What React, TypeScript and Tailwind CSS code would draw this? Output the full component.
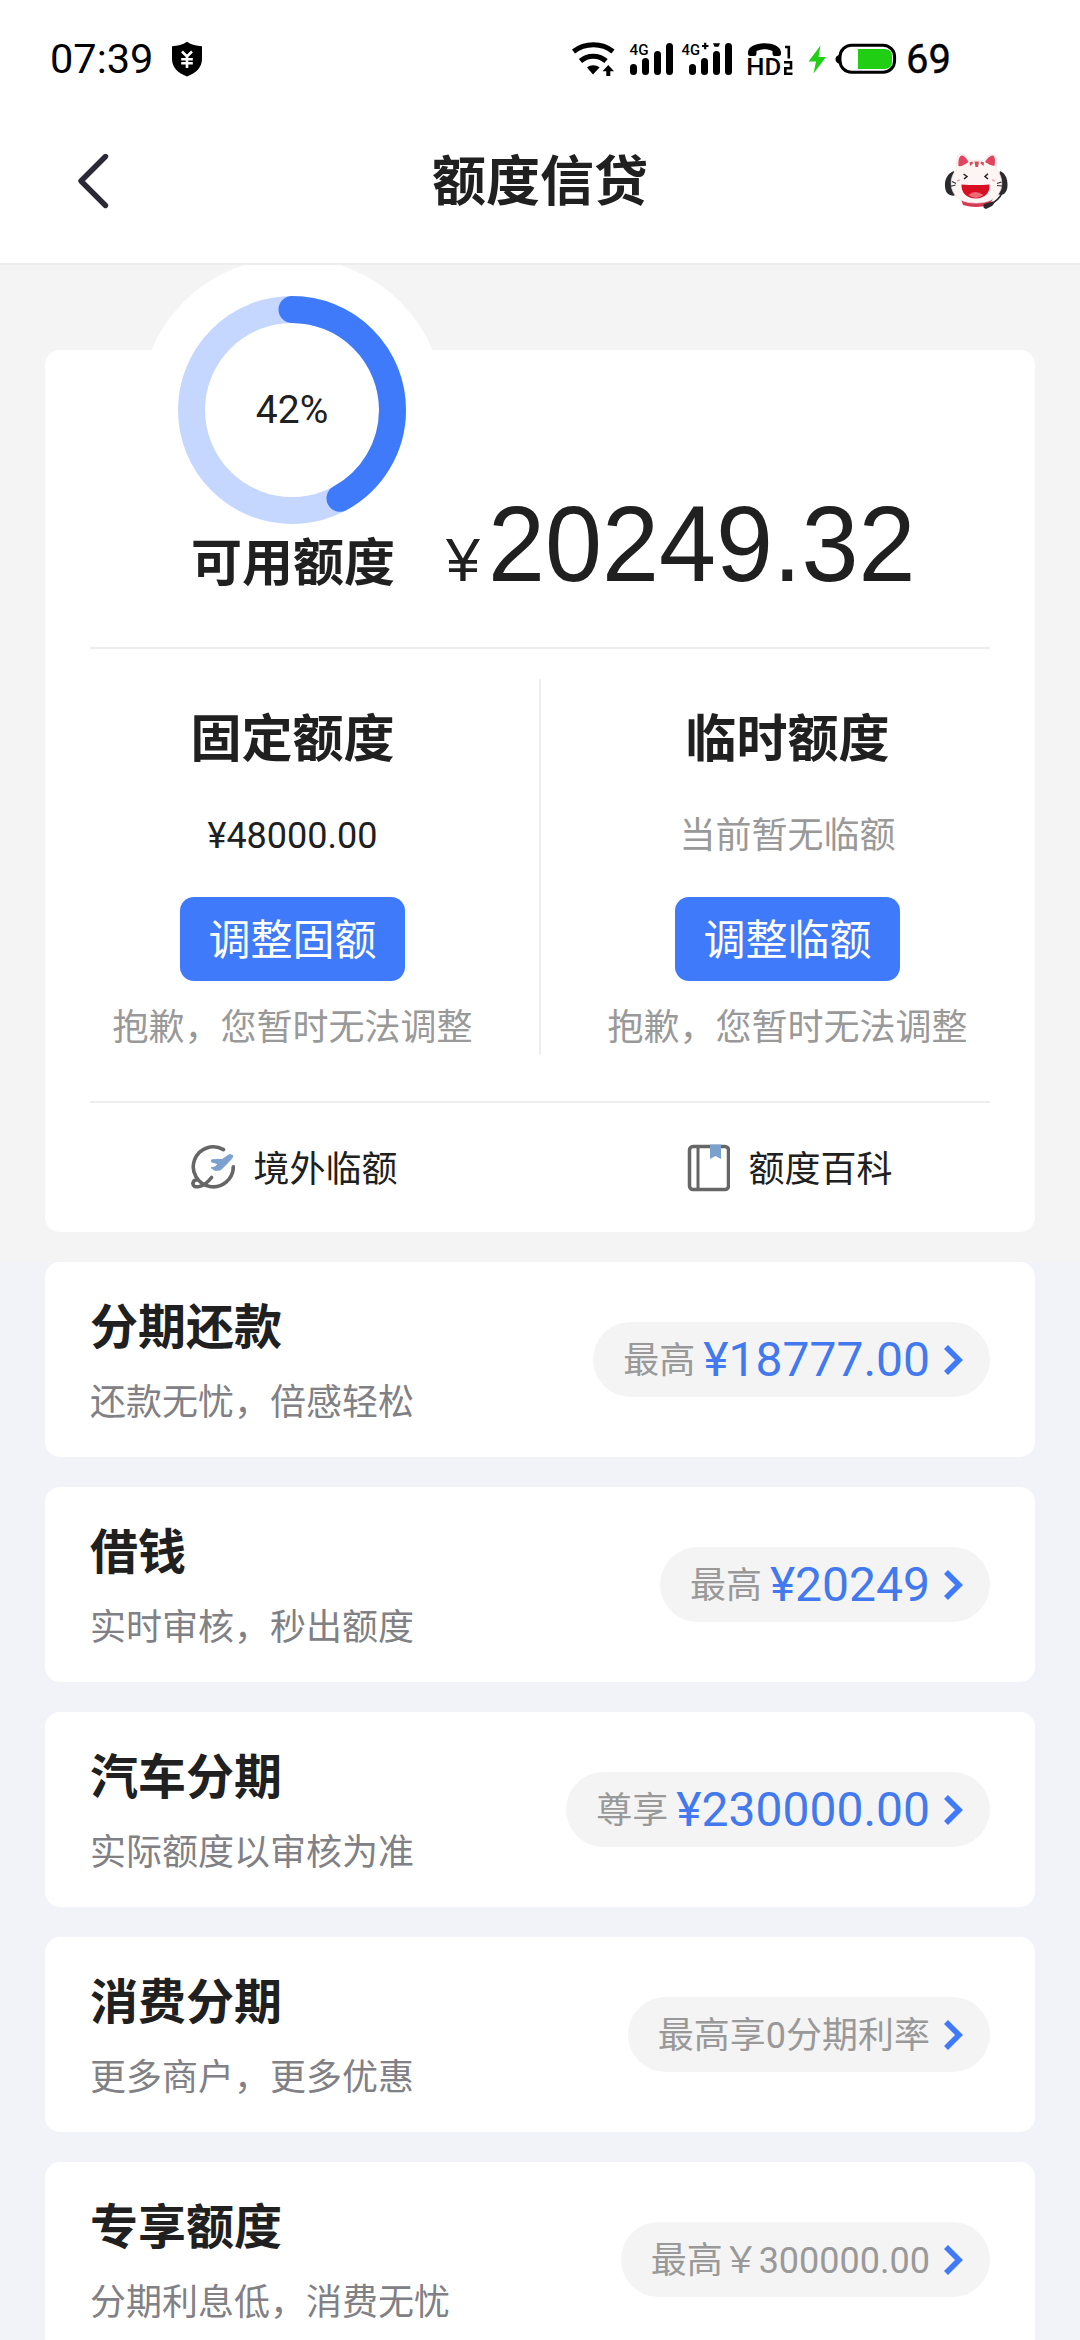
import React from "react";

function ShieldIcon() {
  return (
    <svg className="ml-[18px] h-[36px] w-[32px]" viewBox="0 0 32 36">
      <path d="M16 .8C20.500 3.800 25 5 31 5.300V18c0 8.500-6 14-15 17.500C7 32 1 26.500 1 18V5.300C7 5 11.500 3.800 16 .8Z" fill="#000" />
      <path d="M11 10.500 16 15.500l5-5M10.200 18.200h11.600M10.200 22.200h11.600M16 15v12" fill="none" stroke="#fff" strokeWidth="2.600" />
    </svg>
  );
}

/* Wi-Fi, signal, call and battery indicators share one 390 x 60 strip. */
function StatusIcons() {
  return (
    <svg className="h-[60px] w-[390px] overflow-visible" viewBox="570 29 390 60" fontFamily="Roboto, sans-serif">
      <g fill="none" stroke="#000">
        <path d="M573.500 51.500C585 42.500 602 42.500 613 51.500" strokeWidth="5" />
        <path d="M580.500 61C588 54.500 598.500 54.500 606 61" strokeWidth="5" />
      </g>
      <path d="M587 67.500C590.500 64.500 596 64.500 599.500 67.500L593 74.500Z" />
      <path d="M608.300 65 614 71.300H610.300V76H606.300V71.300H602.500Z" />
      <text x="629.500" y="54.800" fontSize="15.500" fontWeight="500" textLength="19" lengthAdjust="spacingAndGlyphs">4G</text>
      <g stroke="#000" strokeWidth="7" strokeLinecap="round">
        <path d="M633.500 67.500V71.500M645.500 61.500V71.500M657.500 54.500V71.500M669.500 46.500V71.500" />
        <path d="M692.500 67.500V71.500M704.500 61.500V71.500M716.500 54.500V71.500M728.500 46.500V71.500" />
      </g>
      <text x="681.500" y="54.800" fontSize="15.500" fontWeight="500" textLength="18.500" lengthAdjust="spacingAndGlyphs">4G</text>
      <path d="M702 46h6.500M705.200 42.800v6.500" stroke="#000" strokeWidth="2.200" />
      <path d="M713 43.300h7l-1.500 3.400h-4Z" />
      <path d="M748 52.500C748 40 781 40 781 52.500V53.500Q781 56 778.500 56H774.500Q772.500 56 772.500 53.500V51C767 48.800 762 48.800 756.500 51V53.500Q756.500 56 754.500 56H750.500Q748 56 748 53.500Z" />
      <text x="746.300" y="74.500" fontSize="24" fontWeight="500" textLength="35" lengthAdjust="spacingAndGlyphs">HD</text>
      <path d="M785 47H788.800V58.500M784 62.300H791V68.200H785.300V73.800H792.500" fill="none" stroke="#000" strokeWidth="2.600" />
      <path d="M820.500 45.500 808.500 61.500H816L813.500 73.500 826 57H818.500Z" fill="#20cf14" />
      <path d="M842 54C836.500 55 835.500 57.500 835.500 59.200S836.500 63.500 842 64.500Z" />
      <rect x="840" y="45.300" width="54.600" height="27" rx="11.500" fill="#fff" stroke="#000" strokeWidth="3" />
      <path d="M858 49H884.500Q892 49 892 56V62Q892 69 884.500 69H858Z" fill="#20cf14" />
      <text x="906" y="73" fontSize="41" stroke="#000" strokeWidth=".4" textLength="45" lengthAdjust="spacingAndGlyphs">69</text>
    </svg>
  );
}

function CatIcon() {
  return (
    <svg className="h-[58px] w-[66px]" viewBox="943 151 66 58">
      <path d="M945 185C944.500 178 948 172 954 170L958 192Q955 196 950 194 945 192 945 185Z" fill="#2b2a2e" />
      <path d="M1007.500 184C1007.500 177 1005 172 1000 170L995 192Q1000 195 1004 193 1007.500 190 1007.500 184Z" fill="#2b2a2e" />
      <path d="M961 198H993L989 204Q976 208 963 204Z" fill="#d63a52" />
      <path d="M957 168C956 158 957 153 961 153 965 153 969 157 971 160Q977 158 983 160C986 156 990 153 993.500 153.500 997 155 997 163 996 168 1001 173 1003 181 1001 188 997 199 986 202 976 202 964 202 955 198 952 188 950 180 952 173 957 168Z" fill="#fcf5f4" stroke="#f3e4e4" strokeWidth=".8" />
      <path d="M958.500 165C958 158 959.500 154.500 962 154.500 965 155 967.500 159 968.500 161Q962 166 958.500 165Z" fill="#e0445e" />
      <path d="M994.500 165C995.500 159 995 155 992.500 154.500 989 155 986 159 985 161Q990 164.500 994.500 165Z" fill="#e0445e" />
      <path d="M974.500 160.500H979L978 166H975.500ZM969.500 161.500 972.500 160.500 973 162.500 970 165ZM984 161.500 981 160.500 980.500 162.500 983.500 165Z" fill="#d0505c" />
      <path d="M963.500 173 967 175.500 964 178M988 172.800 985 175.500 988 178" fill="none" stroke="#222" strokeWidth="1.500" />
      <path d="M952 180.500 956 182.500M950 185.500 955.500 184M1001.500 181 997 182.500M1002 185 997 184.500" stroke="#333" strokeWidth="1.200" />
      <path d="M957 180 960 179M992 179 995 180" stroke="#f3a8b4" strokeWidth="1.500" />
      <path d="M961.500 183.500Q976 184.500 989.500 183.500C990.500 192 984 197.500 976 197.500 967 197.500 961 192 961.500 183.500Z" fill="#d80f22" />
      <path d="M968.500 194Q975 188 983.500 194 976 200 968.500 194Z" fill="#ee6b77" />
      <path d="M1002 192Q999 199 990 203.500" fill="none" stroke="#2b2a2e" strokeWidth="1.800" />
      <path d="M984 203 993 200.500Q995.500 202 992 205L986 208Q982 207 984 203Z" fill="#2b2a2e" />
    </svg>
  );
}

function StatusBar() {
  return (
    <div className="flex h-[118px] items-center pl-[50px] text-black">
      <span className="font-['Roboto'] text-[41.5px] leading-none">07:39</span>
      <ShieldIcon />
      <div className="mr-[120px] ml-auto">
        <StatusIcons />
      </div>
    </div>
  );
}

function NavBar() {
  return (
    <div className="grid h-[126px] grid-cols-3 items-center">
      <svg className="ml-[76px] h-[60px] w-[36px]" viewBox="0 0 36 60">
        <path d="M29.500 5.500 5 30 29.500 54.500" fill="none" stroke="#2b2838" strokeWidth="5.400" strokeLinecap="round" strokeLinejoin="round" />
      </svg>
      <h1 className="pb-[6px] text-center text-[54px] leading-none font-bold">额度信贷</h1>
      <div className="mr-[71px] justify-self-end">
        <CatIcon />
      </div>
    </div>
  );
}

function UsageRing() {
  const length = 2 * Math.PI * 100.5;
  return (
    <div className="absolute -top-[93px] left-[94px] flex size-[306px] items-center justify-center rounded-full bg-white">
      <svg className="absolute size-[228px] -rotate-90" viewBox="0 0 228 228" fill="none" strokeWidth="27">
        <circle cx="114" cy="114" r="100.500" stroke="#c5d7ff" />
        <circle cx="114" cy="114" r="100.500" stroke="#3f7afa" strokeLinecap="round" strokeDasharray={`${length * 0.42} ${length}`} />
      </svg>
      <span className="font-['Roboto'] text-[39px] leading-none">42%</span>
    </div>
  );
}

function PlaneIcon() {
  return (
    <svg className="h-[48px] w-[44px]" viewBox="0 0 44 48" fill="none">
      <path d="M32.500 5.600A20 20 0 1 0 42.300 22.800" stroke="#666" strokeWidth="3.600" strokeLinecap="round" />
      <path d="M20.500 33.500C17 38 13 41.500 8.500 42.500 4 43.500 1.800 42 2 39.500 2.100 37.500 3.500 36 5.500 36" stroke="#666" strokeWidth="3.600" strokeLinecap="round" />
      <path d="M41.800 11.500 38.500 10.500 31.200 15.500 20.800 15.800 20.200 17.800 27.200 19.800 24.500 22.800 20.200 23.800 24.200 26.500 29.800 25.800 35.800 19.800 40.800 14.500Z" fill="#7ba1cf" stroke="#7ba1cf" strokeLinejoin="round" />
    </svg>
  );
}

function BookIcon() {
  return (
    <svg className="h-[48px] w-[44px]" viewBox="0 0 44 48" fill="none">
      <rect x="3.500" y="2.500" width="39" height="43" rx="3.500" stroke="#666" strokeWidth="3.500" />
      <path d="M12 3V45" stroke="#666" strokeWidth="3" />
      <path d="M24 0.500H35V15L29.500 12 24 15Z" fill="#7ba1cf" />
    </svg>
  );
}

function LimitColumn({ title, children, action }: { title: string; children: React.ReactNode; action: string }) {
  return (
    <div className="flex flex-1 flex-col items-center">
      <h2 className="mt-[26px] text-[51px] leading-[60px] font-bold">{title}</h2>
      <div className="mt-[45px] h-[44px] text-[36px] leading-[44px]">{children}</div>
      <button className="mt-[43px] h-[84px] w-[225px] rounded-[14px] bg-[#3f7afa] pb-[4px] text-[42px] leading-none text-white">{action}</button>
      <p className="mt-[20px] text-[36px] leading-[46px] text-[#999]">抱歉，您暂时无法调整</p>
    </div>
  );
}

function LimitCard() {
  return (
    <section className="relative mx-[45px] mt-[85px] h-[882px] rounded-[15px] bg-white px-[45px]">
      <UsageRing />
      <div className="relative flex h-[297px] items-baseline pt-[145px] pl-[101px]">
        <span className="w-[255px] text-[51px] leading-none font-bold">可用额度</span>
        <span className="mr-[8px] font-['Liberation_Sans'] text-[61px] leading-none">¥</span>
        <span className="origin-[50%_86%] scale-y-[1.05] font-['Liberation_Sans'] text-[102.5px] leading-none">20249.32</span>
      </div>
      <hr className="h-[2px] border-0 bg-[#ededed]" />
      <div className="-mx-[45px] flex h-[452px] pt-[30px]">
        <LimitColumn title="固定额度" action="调整固额">
          <span className="font-['Roboto']">¥48000.00</span>
        </LimitColumn>
        <div className="-mx-px h-[376px] w-[2px] bg-[#ededed]" />
        <LimitColumn title="临时额度" action="调整临额">
          <span className="text-[#999]">当前暂无临额</span>
        </LimitColumn>
      </div>
      <hr className="h-[2px] border-0 bg-[#ededed]" />
      <div className="-mx-[45px] flex h-[129px] items-center text-[36px] leading-none">
        <div className="flex flex-1 items-center justify-center gap-[18px] pl-[4px]">
          <PlaneIcon />
          <span className="pb-[4px]">境外临额</span>
        </div>
        <div className="flex flex-1 items-center justify-center gap-[18px] pl-[4px]">
          <BookIcon />
          <span className="pb-[4px]">额度百科</span>
        </div>
      </div>
    </section>
  );
}

type Product = { title: string; note: string; label: string; amount?: string };

const products: Product[] = [
  { title: "分期还款", note: "还款无忧，倍感轻松", label: "最高", amount: "¥18777.00" },
  { title: "借钱", note: "实时审核，秒出额度", label: "最高", amount: "¥20249" },
  { title: "汽车分期", note: "实际额度以审核为准", label: "尊享", amount: "¥230000.00" },
  { title: "消费分期", note: "更多商户，更多优惠", label: "最高享0分期利率" },
  { title: "专享额度", note: "分期利息低，消费无忧", label: "最高￥300000.00" },
];

function ProductCard({ title, note, label, amount }: Product) {
  return (
    <section className="flex h-[195px] shrink-0 items-center justify-between rounded-[15px] bg-white px-[45px]">
      <div className="flex h-full flex-col">
        <h2 className="mt-[31px] text-[48px] leading-[60px] font-bold">{title}</h2>
        <p className="mt-[23px] text-[36px] leading-[46px] text-[#808085]">{note}</p>
      </div>
      <div className="flex h-[75px] items-center rounded-full bg-[#f4f4f4] pr-[27px] pl-[30px]">
        {amount ? (
          <>
            <span className="pb-[6px] text-[36px] leading-none text-[#999]">{label}</span>
            <span className="ml-[8px] font-['Roboto'] text-[48px] leading-none text-[#4279ee]">{amount}</span>
          </>
        ) : (
          <span className="pt-[3px] font-['Roboto','Noto_Sans_CJK_SC',sans-serif] text-[36px] leading-none text-[#999]">{label}</span>
        )}
        <svg className="ml-[13px] h-[32px] w-[20px]" viewBox="0 0 20 32">
          <path d="M3 3 16 16 3 29" fill="none" stroke="#3f7afa" strokeWidth="5.600" />
        </svg>
      </div>
    </section>
  );
}

export default function App() {
  return (
    <div className="h-[2340px] w-[1080px] overflow-hidden bg-[#f2f3f8] font-['Noto_Sans_CJK_SC',sans-serif] text-[#202020]">
      <header className="relative z-10 h-[265px] border-b-2 border-[#ededed] bg-white">
        <StatusBar />
        <NavBar />
      </header>
      <div className="flex h-[997px] flex-col bg-[#f4f4f4]">
        <LimitCard />
      </div>
      <main className="flex flex-col gap-[30px] px-[45px]">
        {products.map((product) => (
          <ProductCard key={product.title} {...product} />
        ))}
      </main>
    </div>
  );
}
